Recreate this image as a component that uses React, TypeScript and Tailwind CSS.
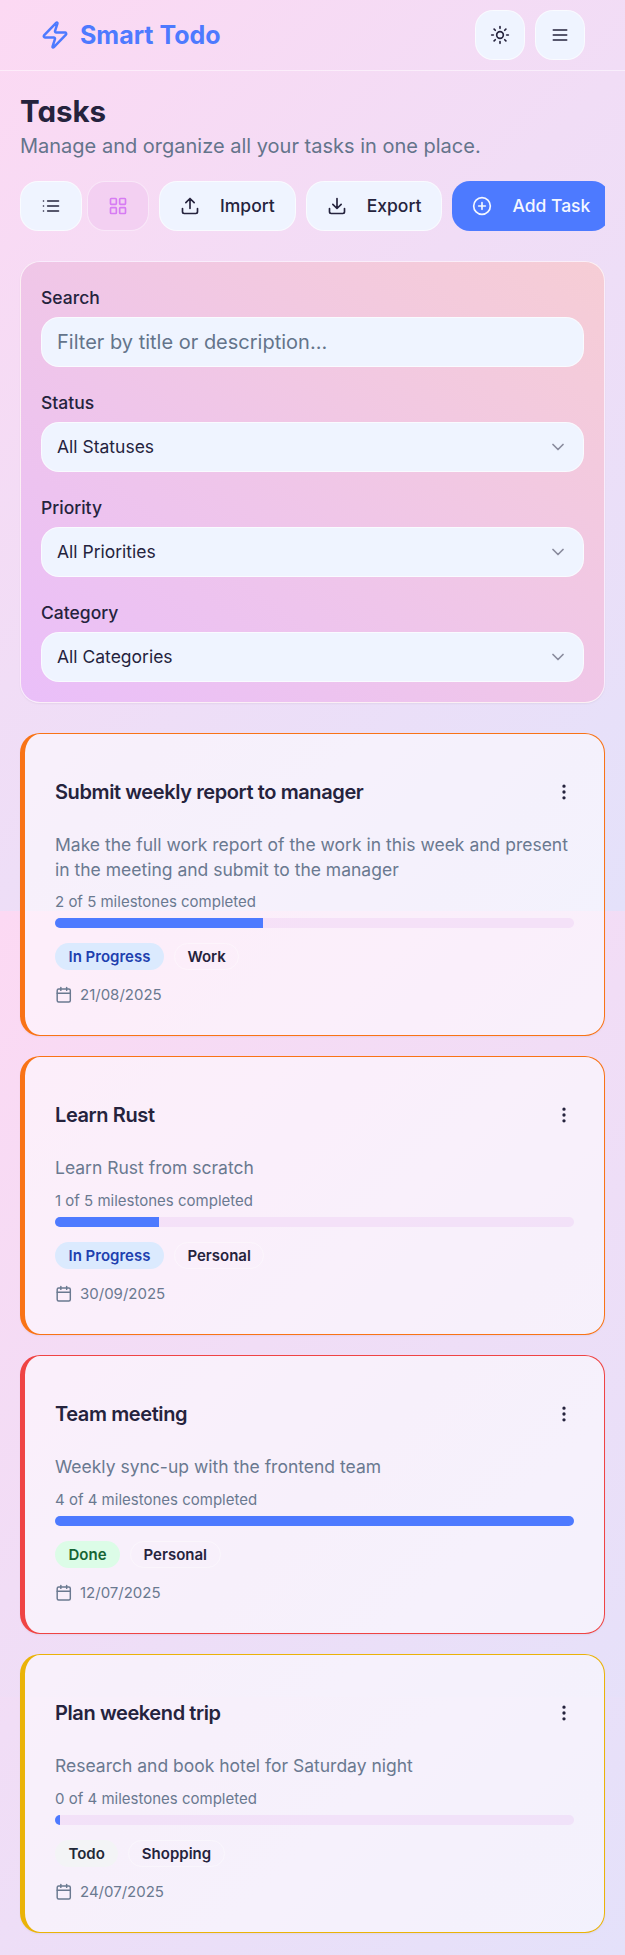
import React from "react";
import { Calendar, ChevronDown, CirclePlus, EllipsisVertical, LayoutGrid, Sun, Zap } from "lucide-react";

type Task = {
  title: string;
  description: string;
  done: number;
  total: number;
  status: "In Progress" | "Done" | "Todo";
  category: string;
  date: string;
  border: string;
};

const tasks: Task[] = [
  {
    title: "Submit weekly report to manager",
    description:
      "Make the full work report of the work in this week and present in the meeting and submit to the manager",
    done: 2,
    total: 5,
    status: "In Progress",
    category: "Work",
    date: "21/08/2025",
    border: "border-[#f97316] h-[303px]",
  },
  {
    title: "Learn Rust",
    description: "Learn Rust from scratch",
    done: 1,
    total: 5,
    status: "In Progress",
    category: "Personal",
    date: "30/09/2025",
    border: "border-[#f97316] h-[279px]",
  },
  {
    title: "Team meeting",
    description: "Weekly sync-up with the frontend team",
    done: 4,
    total: 4,
    status: "Done",
    category: "Personal",
    date: "12/07/2025",
    border: "border-[#ef4444] h-[279px]",
  },
  {
    title: "Plan weekend trip",
    description: "Research and book hotel for Saturday night",
    done: 0,
    total: 4,
    status: "Todo",
    category: "Shopping",
    date: "24/07/2025",
    border: "border-[#eab308] h-[279px]",
  },
];

const statusStyle: Record<Task["status"], string> = {
  "In Progress": "bg-[#dbeafe] text-[#1e40af]",
  Done: "bg-[#dcfce7] text-[#166534]",
  Todo: "bg-[#f3f4f6] text-[#1f2937]",
};

function LineIcon({ children }: { children: React.ReactNode }) {
  return (
    <svg
      className="size-5 shrink-0"
      viewBox="0 0 24 24"
      fill="none"
      stroke="currentColor"
      strokeWidth="2"
      strokeLinecap="round"
      strokeLinejoin="round"
    >
      {children}
    </svg>
  );
}

const MenuIcon = () => (
  <LineIcon>
    <path d="M4 6h16M4 12h16M4 18h16" />
  </LineIcon>
);

const ListIcon = () => (
  <LineIcon>
    <path d="M3 6h.01M3 12h.01M3 18h.01M8 6h13M8 12h13M8 18h13" />
  </LineIcon>
);

const UploadIcon = () => (
  <LineIcon>
    <path d="M21 15v4a2 2 0 0 1-2 2H5a2 2 0 0 1-2-2v-4" />
    <path d="m17 8-5-5-5 5M12 3v12" />
  </LineIcon>
);

const DownloadIcon = () => (
  <LineIcon>
    <path d="M21 15v4a2 2 0 0 1-2 2H5a2 2 0 0 1-2-2v-4" />
    <path d="m7 10 5 5 5-5M12 15V3" />
  </LineIcon>
);

const surface =
  "flex h-[50px] shrink-0 items-center rounded-[18px] border border-white/60 bg-[#eff4ff] bg-clip-border";

function Header() {
  return (
    <header className="flex h-[71px] items-center justify-between border-b border-white/50 px-10">
      <div className="flex items-center gap-2.5 text-[#4d7aff]">
        <Zap className="size-[30px]" strokeWidth={2} />
        <span className="text-[25px] leading-[35px] font-bold">Smart Todo</span>
      </div>
      <div className="flex gap-2.5">
        <button className={`${surface} w-[50px] justify-center`}>
          <Sun className="size-5" />
        </button>
        <button className={`${surface} w-[50px] justify-center`}>
          <MenuIcon />
        </button>
      </div>
    </header>
  );
}

function Toolbar() {
  return (
    <div className="mt-5 flex gap-2.5 overflow-hidden text-[17.5px] font-medium">
      <div className="flex shrink-0 gap-[5px]">
        <button className={`${surface} w-[62px] justify-center`}>
          <ListIcon />
        </button>
        <button className="flex h-[50px] w-[62px] shrink-0 items-center justify-center rounded-[18px] border border-white/50 bg-[#f0c5ef]/50 text-[#d67cf3]">
          <LayoutGrid className="size-5" />
        </button>
      </div>
      <button className={`${surface} gap-5 px-5`}>
        <UploadIcon />
        Import
      </button>
      <button className={`${surface} gap-5 px-5`}>
        <DownloadIcon />
        Export
      </button>
      <button className="flex h-[50px] shrink-0 items-center gap-5 rounded-[18px] bg-[#4d7aff] px-5 text-[#f4f7ff]">
        <CirclePlus className="size-5" />
        Add Task
      </button>
    </div>
  );
}

function Field({ label, children }: { label: string; children: React.ReactNode }) {
  return (
    <div className="flex flex-col gap-[5px]">
      <div className="h-[30px] text-[20px] leading-[30px]">
        <span className="text-[17.5px] font-medium">{label}</span>
      </div>
      {children}
    </div>
  );
}

function SelectBox({ value }: { value: string }) {
  return (
    <button className={`${surface} justify-between px-[15px] text-[17.5px]`}>
      {value}
      <ChevronDown className="size-5 opacity-50" />
    </button>
  );
}

function Filters() {
  return (
    <section className="mt-[30px] flex flex-col gap-5 rounded-[20px] border border-white/70 bg-linear-to-tr from-[#eabff9] to-[#f6cdd5] p-5 shadow-xs">
      <Field label="Search">
        <input
          className={`${surface} px-[15px] text-[20px] placeholder:text-[#64748b]`}
          placeholder="Filter by title or description..."
        />
      </Field>
      <Field label="Status">
        <SelectBox value="All Statuses" />
      </Field>
      <Field label="Priority">
        <SelectBox value="All Priorities" />
      </Field>
      <Field label="Category">
        <SelectBox value="All Categories" />
      </Field>
    </section>
  );
}

function TaskCard({ task }: { task: Task }) {
  const percent = Math.max(1, (task.done / task.total) * 100);
  return (
    <article
      className={`flex flex-col rounded-[20px] border border-l-[5px] bg-white/55 p-[30px] shadow-xs ${task.border}`}
    >
      <div className="flex h-14 items-center justify-between">
        <h3 className="text-[20px] leading-[25px] font-semibold tracking-[-0.02em]">{task.title}</h3>
        <EllipsisVertical className="size-5" />
      </div>
      <p className="mt-3 text-[17.5px] leading-[25px] text-[#6a7990]">{task.description}</p>
      <div className="mt-auto">
        <p className="text-[15px] leading-5 text-[#6a7990]">
          {task.done} of {task.total} milestones completed
        </p>
        <div className="mt-[6.5px] h-2.5 overflow-hidden rounded-full bg-[#e9bff3]/30">
          <div className="h-full bg-[#4d7aff]" style={{ width: `${percent}%` }} />
        </div>
        <div className="mt-[15px] flex gap-2.5 text-[15px] leading-5 font-semibold">
          <span className={`rounded-full border border-transparent px-[12.5px] py-[2.5px] ${statusStyle[task.status]}`}>
            {task.status}
          </span>
          <span className="rounded-full border border-white/40 px-[12.5px] py-[2.5px]">{task.category}</span>
        </div>
        <div className="mt-[15px] flex h-5 items-center text-[15px] leading-5 text-[#6a7990]">
          <Calendar className="mr-[7.5px] size-[17.5px]" />
          {task.date}
        </div>
      </div>
    </article>
  );
}

function Backdrop() {
  return (
    <div className="absolute inset-0 -z-10 flex flex-col">
      <div className="h-[911px] bg-linear-[135deg,#fcd9f3,#f1ddf6_45%,#e4e1fa]" />
      <div className="h-[786px] bg-linear-[135deg,#fcd9f3,#f1ddf6_45%,#e4e1fa] bg-[length:100%_911px] bg-top bg-no-repeat" />
      <div className="h-[258px] bg-linear-[135deg,#fcd9f3,#f1ddf6_45%,#e4e1fa] bg-[length:100%_911px] bg-bottom bg-no-repeat" />
    </div>
  );
}

export default function App() {
  return (
    <div className="relative isolate h-[1955px] w-full overflow-hidden font-['Inter',sans-serif] text-[#25233d]">
      <Backdrop />
      <Header />
      <main className="px-5">
        <h1 className="mt-[22px] text-[29.5px] leading-[37px] font-bold [font-feature-settings:'cv11']">Tasks</h1>
        <p className="mt-px text-[20px] leading-[30px] text-[#64748b]">
          Manage and organize all your tasks in one place.
        </p>
        <Toolbar />
        <Filters />
        <div className="mt-[30px] flex flex-col gap-5">
          {tasks.map((task) => (
            <TaskCard key={task.title} task={task} />
          ))}
        </div>
      </main>
    </div>
  );
}
